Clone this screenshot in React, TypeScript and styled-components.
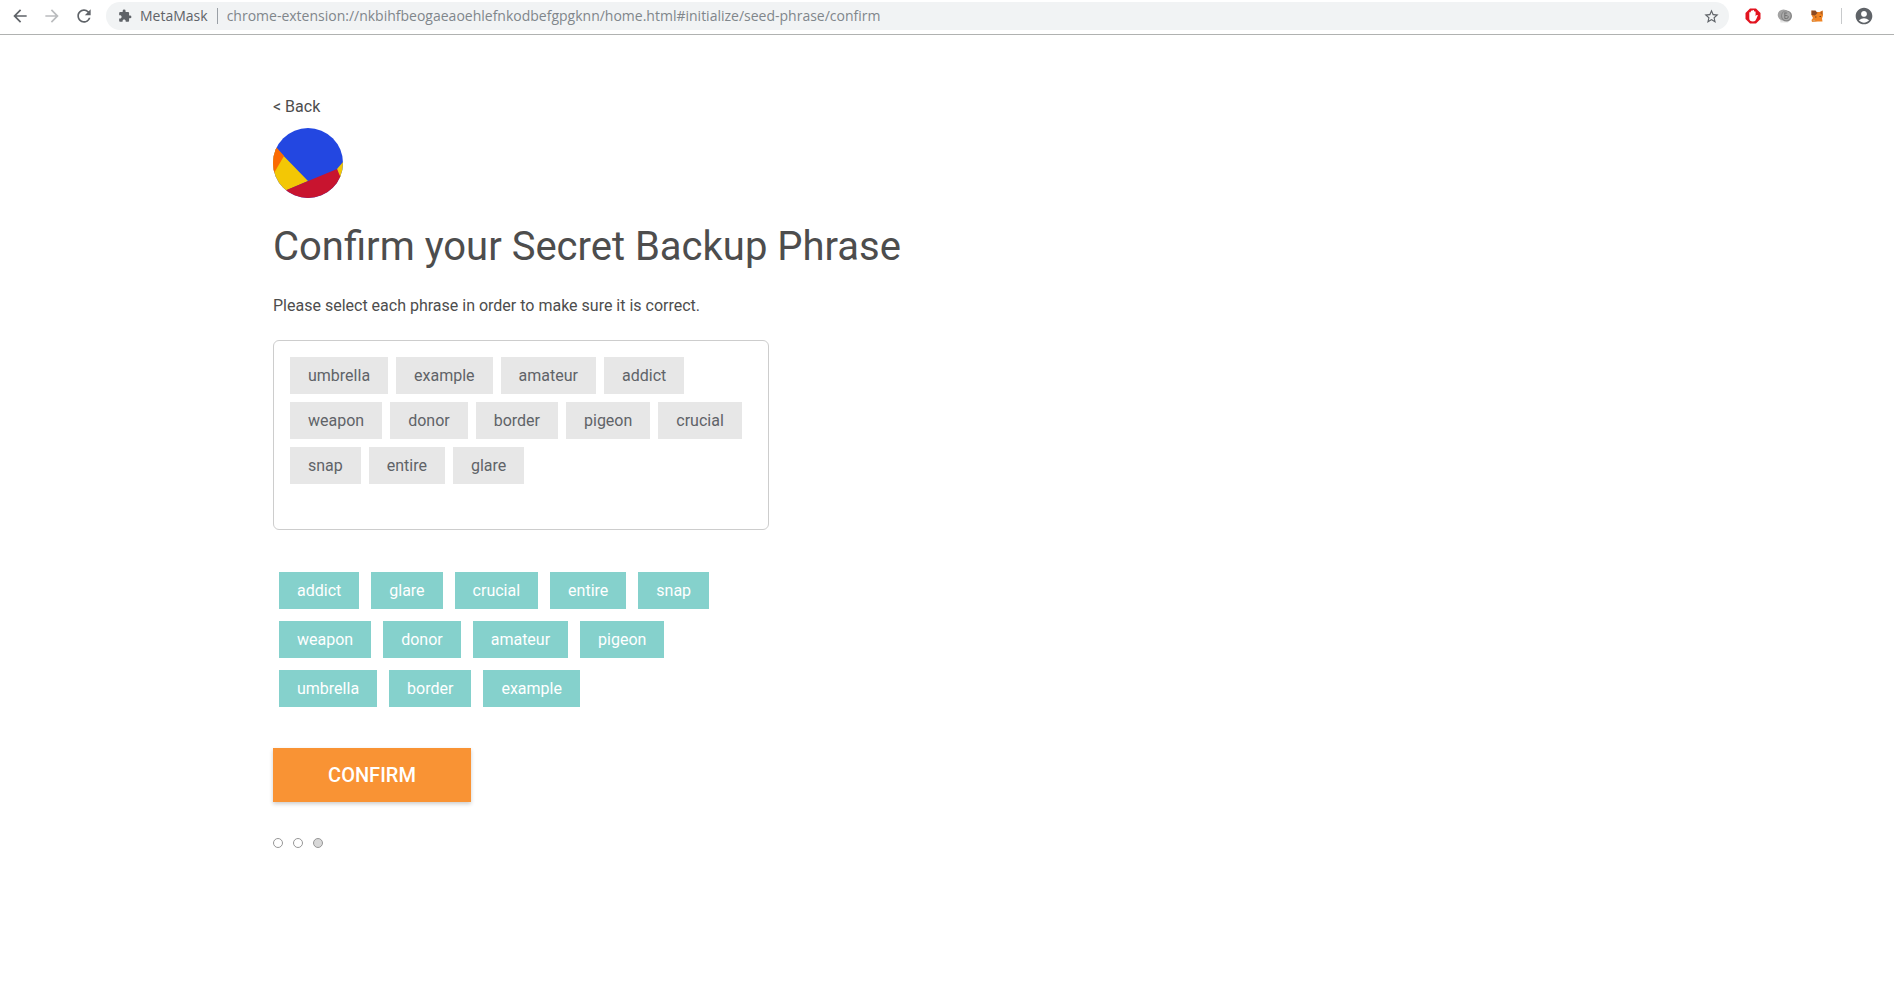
import React, { useState } from 'react';
import styled, { createGlobalStyle } from 'styled-components';
import {
  MdArrowBack,
  MdArrowForward,
  MdRefresh,
  MdExtension,
  MdStarBorder,
  MdAccountCircle,
} from 'react-icons/md';

const GlobalStyle = createGlobalStyle`
  *, *::before, *::after { box-sizing: border-box; }
  body {
    margin: 0;
    background: #fff;
    color: #4d4d4d;
    font-family: Roboto, "Liberation Sans", sans-serif;
    font-size: 16px;
    line-height: 20px;
  }
  button, input { font: inherit; }
`;

const BrowserBar = styled.header`
  display: flex;
  align-items: center;
  height: 35px;
  padding: 2px 20px 4px 10px;
  border-bottom: 1px solid #b0b2b1;
`;

const IconButton = styled.button<{ $color?: string }>`
  display: flex;
  align-items: center;
  justify-content: center;
  flex: none;
  width: 20px;
  height: 20px;
  padding: 0;
  border: 0;
  background: none;
  color: ${(p) => p.$color ?? '#5f6368'};
  cursor: pointer;
`;

const Navigation = styled.nav`
  display: flex;
  gap: 12px;
  margin-right: 12px;
`;

const AddressBar = styled.label`
  display: flex;
  flex: 1;
  align-items: center;
  min-width: 0;
  height: 28px;
  padding: 0 8px 0 12px;
  border-radius: 14px;
  background: #f1f3f4;
  color: #5f6368;
  font-family: "Open Sans", "Noto Sans", sans-serif;
  font-size: 14px;
`;

const SiteName = styled.span`
  margin-left: 8px;
  padding-right: 9px;
  border-right: 1px solid #9aa0a6;
  line-height: 16px;
`;

const AddressInput = styled.input`
  flex: 1;
  min-width: 0;
  margin-left: 9px;
  padding: 0;
  border: 0;
  outline: 0;
  background: none;
  color: #80868b;
`;

const Extensions = styled.div`
  display: flex;
  align-items: center;
  gap: 12px;
  margin-left: 14px;
`;

const Profile = styled.div`
  display: flex;
  align-items: center;
  height: 16px;
  margin-left: 14px;
  padding-left: 12px;
  border-left: 1px solid #c8cacc;
`;

const Page = styled.main`
  display: flex;
  flex-direction: column;
  align-items: flex-start;
  width: 100%;
  max-width: 1380px;
  margin: 0 auto;
  padding: 62px 16px 40px;
`;

const BackLink = styled.a`
  margin-bottom: 11px;
  color: inherit;
  text-decoration: none;
`;

const Title = styled.h1`
  margin: 24px 0;
  font-size: 40px;
  font-weight: 400;
  line-height: 50px;
`;

const Description = styled.p`
  margin: 0 0 24px;
`;

const SelectedWords = styled.section`
  display: flex;
  flex-wrap: wrap;
  align-content: flex-start;
  gap: 8px;
  width: 100%;
  max-width: 496px;
  min-height: 190px;
  padding: 16px;
  border: 1px solid #cdcdcd;
  border-radius: 6px;
`;

const ShuffledWords = styled.section`
  display: flex;
  flex-wrap: wrap;
  gap: 12px;
  width: 100%;
  max-width: 496px;
  margin: 36px 0 35px;
  padding: 6px;
`;

const Word = styled.button<{ $picked?: boolean }>`
  height: 37px;
  padding: 0 18px;
  border: 0;
  background: ${(p) => (p.$picked ? '#85d1cc' : '#e7e7e7')};
  color: ${(p) => (p.$picked ? '#fff' : '#5f6368')};
  cursor: pointer;
`;

const ConfirmButton = styled.button`
  width: 198px;
  height: 54px;
  padding: 0;
  border: 0;
  background: #f99334;
  box-shadow: 0 2px 4px rgba(0, 0, 0, 0.2);
  color: #fff;
  font-size: 20px;
  font-weight: 500;
  cursor: pointer;
`;

const Steps = styled.div`
  display: flex;
  gap: 10px;
  margin-top: 36px;
`;

const Step = styled.span<{ $active?: boolean }>`
  width: 10px;
  height: 10px;
  border: 1px solid #979797;
  border-radius: 50%;
  background: ${(p) => (p.$active ? '#d8d8d8' : '#fff')};
`;

const Identicon = () => (
  <svg width="70" height="70" viewBox="0 0 70 70" aria-hidden="true">
    <clipPath id="avatar-circle">
      <circle cx="35" cy="35" r="35" />
    </clipPath>
    <g clipPath="url(#avatar-circle)">
      <rect width="70" height="70" fill="#2347e1" />
      <path d="M0 17 L35 53 L14 62 L0 70 Z" fill="#f3c705" />
      <path d="M0 17 L4 20 L11 28 L1 45 L0 46 Z" fill="#fb6a01" />
      <path d="M64 41 L70 34 V50 H66 Z" fill="#f3c705" />
      <path d="M10 63.500 L64 41 L70 55 V70 H10 Z" fill="#c8142f" />
    </g>
  </svg>
);

const BlockerIcon = () => (
  <svg width="16" height="16" viewBox="0 0 16 16" aria-hidden="true">
    <path d="M5 0.500h6L15.500 5v6L11 15.500H5L0.500 11V5Z" fill="#e2131f" />
    <path
      d="M4.300 8.500V4.400q.7-.8 1.500 0V3q.8-.9 1.600 0v-.7q.8-.8 1.600 0V3.600q.8-.8 1.600.1v4.600l1-1.200q.9-.5 1.300.2L11.300 11q-.7 2.600-3.300 2.600Q4.300 13.500 4.300 10.500Z"
      fill="#fff"
    />
  </svg>
);

const CoinIcon = () => (
  <svg width="16" height="16" viewBox="0 0 16 16" aria-hidden="true">
    <path d="M3 12h9l-1 2.500H3.500Z" fill="#e4e4e4" />
    <ellipse cx="6.500" cy="7" rx="5.800" ry="5.500" fill="#a3a3a3" />
    <ellipse cx="9.500" cy="8" rx="5.500" ry="5.500" fill="#858585" />
    <ellipse cx="9.300" cy="7.800" rx="4.300" ry="4.500" fill="#a9a9a9" />
    <path
      d="M7.800 4.500v6h2q1.700-.3 1.500-1.800-.3-1.500-3.300-1.200M7.800 5h2.400"
      fill="none"
      stroke="#747474"
    />
  </svg>
);

const FoxIcon = () => (
  <svg width="16" height="16" viewBox="0 0 16 16" aria-hidden="true">
    <path d="M2.500 2.500 6.500 4h4l3-1.500.5 5-1 3 .5 3H9l-6 .5-.5-2 1.500-2-1.500-3Z" fill="#f08322" />
    <path d="M2.500 2.500h4L8.500 5 6 7.500 2.500 7Z" fill="#8c4a22" />
    <path d="M13.500 2.500 11 5l2.500 2Z" fill="#b5601f" />
    <path d="M6 9h1.500M10.500 8.500H12" stroke="#7a4018" />
    <path d="M3 13.500l2-2 2 2Z" fill="#d9a46f" />
  </svg>
);

const SELECTED = [
  'umbrella', 'example', 'amateur', 'addict', 'weapon', 'donor',
  'border', 'pigeon', 'crucial', 'snap', 'entire', 'glare',
];

const SHUFFLED = [
  'addict', 'glare', 'crucial', 'entire', 'snap', 'weapon',
  'donor', 'amateur', 'pigeon', 'umbrella', 'border', 'example',
];

const EXTENSION_URL =
  'chrome-extension://nkbihfbeogaeaoehlefnkodbefgpgknn/home.html#initialize/seed-phrase/confirm';

export default function App() {
  const [url, setUrl] = useState(EXTENSION_URL);

  return (
    <>
      <GlobalStyle />
      <BrowserBar>
        <Navigation aria-label="Browser">
          <IconButton aria-label="Go back"><MdArrowBack size={20} /></IconButton>
          <IconButton aria-label="Go forward" $color="#babcbe"><MdArrowForward size={20} /></IconButton>
          <IconButton aria-label="Reload"><MdRefresh size={20} /></IconButton>
        </Navigation>
        <AddressBar>
          <MdExtension size={14} />
          <SiteName>MetaMask</SiteName>
          <AddressInput aria-label="Address" value={url} onChange={(e) => setUrl(e.target.value)} />
          <IconButton aria-label="Bookmark this page"><MdStarBorder size={17} /></IconButton>
        </AddressBar>
        <Extensions>
          <IconButton aria-label="Ad blocker"><BlockerIcon /></IconButton>
          <IconButton aria-label="Coin wallet"><CoinIcon /></IconButton>
          <IconButton aria-label="Fox wallet"><FoxIcon /></IconButton>
        </Extensions>
        <Profile>
          <IconButton aria-label="Profile"><MdAccountCircle size={20} /></IconButton>
        </Profile>
      </BrowserBar>
      <Page>
        <BackLink href="#back">&lt; Back</BackLink>
        <Identicon />
        <Title>Confirm your Secret Backup Phrase</Title>
        <Description>Please select each phrase in order to make sure it is correct.</Description>
        <SelectedWords aria-label="Selected words">
          {SELECTED.map((word) => <Word key={word} type="button">{word}</Word>)}
        </SelectedWords>
        <ShuffledWords aria-label="Available words">
          {SHUFFLED.map((word) => <Word key={word} type="button" $picked>{word}</Word>)}
        </ShuffledWords>
        <ConfirmButton type="button">CONFIRM</ConfirmButton>
        <Steps aria-label="Step 3 of 3">
          <Step />
          <Step />
          <Step $active />
        </Steps>
      </Page>
    </>
  );
}
